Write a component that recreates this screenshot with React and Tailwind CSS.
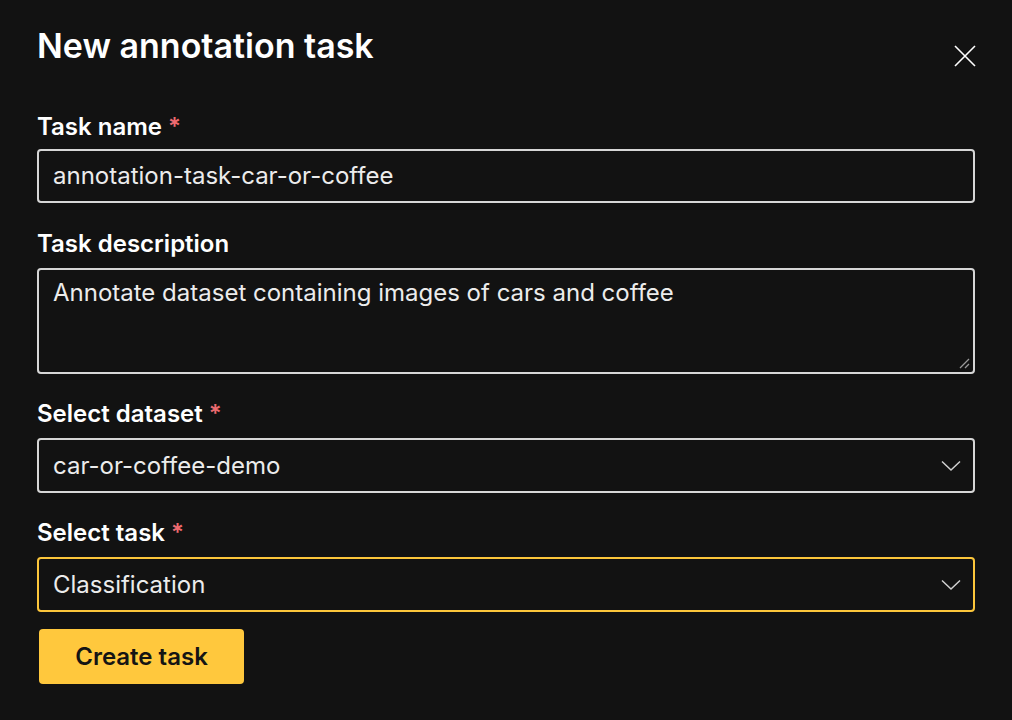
import React from "react"

const Label = ({ children, required }) => (
  <label className="block text-[24px] leading-[28px] font-semibold text-white">
    {children}
    {required && <span className="ml-[6px] text-[#ec6a6f]">*</span>}
  </label>
)

const Chevron = () => (
  <svg width="20" height="11" viewBox="0 0 20 11" fill="none" className="absolute right-[12px] top-1/2 -translate-y-1/2">
    <path d="M1 1L10 9.5L19 1" stroke="#d0d0d0" strokeWidth="1.5" />
  </svg>
)

const Select = ({ value, active }) => (
  <div
    className={
      "relative h-[55px] rounded-[4px] border-2 flex items-center px-[14px] text-[24px] text-[#ececec] " +
      (active ? "border-[#fcc63b]" : "border-[#d6d6d6]")
    }
  >
    {value}
    <Chevron />
  </div>
)

export default function App() {
  return (
    <div className="min-h-[720px] w-full bg-[#121212] px-[37px] pt-[26px]" style={{ fontFamily: "Inter, 'Noto Sans', sans-serif" }}>
      <div className="flex items-start justify-between">
        <h1 className="text-[34px] leading-[40px] font-semibold text-white">New annotation task</h1>
        <button className="mt-[19px] mr-[-1px] text-white">
          <svg width="22" height="22" viewBox="0 0 22 22" fill="none">
            <path d="M1 1L21 21M21 1L1 21" stroke="#fff" strokeWidth="1.6" />
          </svg>
        </button>
      </div>

      <div className="mt-[46px] flex flex-col">
        <Label required>Task name</Label>
        <div className="mt-[8px] h-[54px] rounded-[4px] border-2 border-[#d6d6d6] flex items-center px-[14px] text-[24px] text-[#ececec]">
          annotation-task-car-or-coffee
        </div>

        <div className="mt-[27px]">
          <Label>Task description</Label>
        </div>
        <div className="relative mt-[10px] h-[106px] rounded-[4px] border-2 border-[#d6d6d6] px-[14px] pt-[7px] text-[24px] leading-[32px] text-[#ececec]">
          Annotate dataset containing images of cars and coffee
          <svg width="12" height="12" viewBox="0 0 12 12" className="absolute right-[3px] bottom-[3px]">
            <path d="M11 2L2 11M11 7L7 11" stroke="#9a9a9a" strokeWidth="1.3" />
          </svg>
        </div>

        <div className="mt-[26px]">
          <Label required>Select dataset</Label>
        </div>
        <div className="mt-[10px]">
          <Select value="car-or-coffee-demo" />
        </div>

        <div className="mt-[26px]">
          <Label required>Select task</Label>
        </div>
        <div className="mt-[10px]">
          <Select value="Classification" active />
        </div>

        <div className="mt-[17px] pl-[2px]">
          <button className="h-[55px] w-[205px] rounded-[4px] bg-[#ffc83d] text-[24px] font-semibold text-[#141414]">
            Create task
          </button>
        </div>
      </div>
    </div>
  )
}
